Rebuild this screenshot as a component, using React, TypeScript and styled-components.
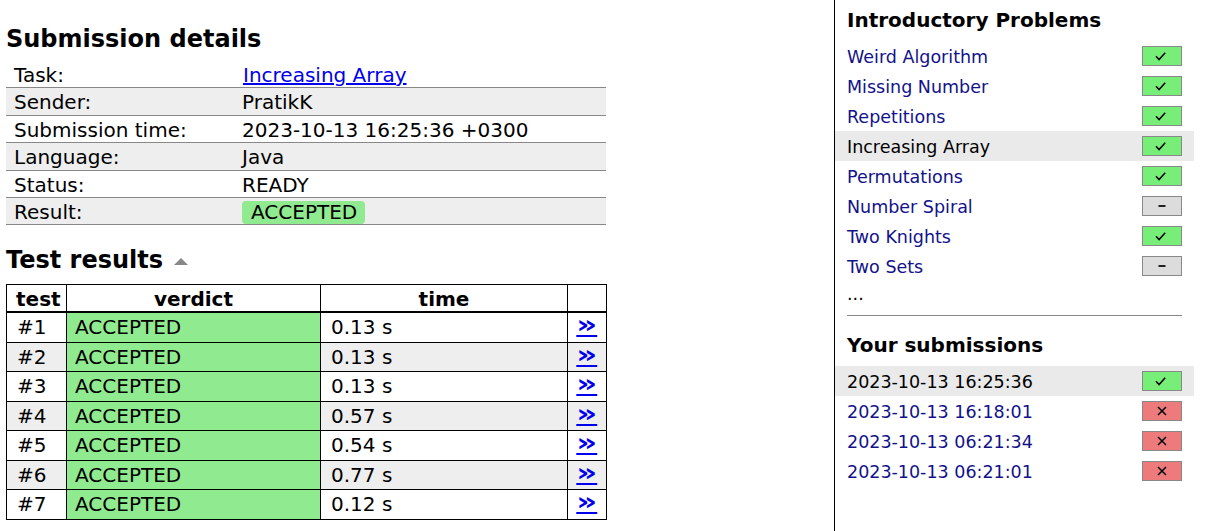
import React from 'react';
import styled, { createGlobalStyle } from 'styled-components';

const GlobalStyle = createGlobalStyle`
  html, body { margin: 0; padding: 0; background: #fff; }
  body {
    font-family: "DejaVu Sans", Verdana, sans-serif;
    font-size: 20px;
    color: #000;
  }
`;

const Page = styled.div`
  display: flex;
  min-height: 100vh;
`;

const Main = styled.main`
  flex: 0 0 834px;
  box-sizing: border-box;
  padding: 25px 0 0 6px;
`;

const Heading = styled.h2<{ $top?: number }>`
  margin: ${(p) => p.$top ?? 0}px 0 0;
  font-size: 24px;
  line-height: 28px;
  font-weight: bold;
  display: flex;
  align-items: center;
  gap: 11px;
`;

const Caret = styled.svg`
  width: 14px;
  height: 7px;
  margin-top: 3px;
`;

const SummaryTable = styled.table`
  width: 600px;
  border-collapse: collapse;
  margin-top: 8px;
`;

const SummaryRow = styled.tr<{ $alt?: boolean }>`
  background: ${(p) => (p.$alt ? '#eee' : 'transparent')};
  border-bottom: 1px solid #888;
`;

const SummaryLabel = styled.td`
  width: 212px;
  padding: 2px 8px 0;
  line-height: 24.4px;
`;

const SummaryValue = styled.td`
  padding: 2px 8px 0;
  line-height: 24.4px;
`;

const TaskLink = styled.a`
  color: #0000ee;
  text-decoration: underline;
  margin-left: 1px;
`;

const Badge = styled.span`
  display: inline-block;
  background: #90ea90;
  border-radius: 4px;
  padding: 0 8px 0 9px;
  line-height: 23px;
`;

const TestTable = styled.table`
  width: 600px;
  border-collapse: collapse;
  table-layout: fixed;
  margin-top: 10px;
  border: 1px solid #000;
`;

const Th = styled.th`
  font-weight: bold;
  text-align: center;
  padding: 2px 9px 0;
  line-height: 24px;
  border: 1px solid #000;
  border-bottom: 2px solid #000;
`;

const TestRow = styled.tr<{ $alt?: boolean }>`
  background: ${(p) => (p.$alt ? '#eee' : '#fff')};
`;

const Td = styled.td<{ $verdict?: boolean; $center?: boolean }>`
  padding: 3px 9px 2px 10px;
  line-height: 23.5px;
  height: 23.5px;
  border: 1px solid #000;
  white-space: nowrap;
  background: ${(p) => (p.$verdict ? '#90ea90' : 'inherit')};
  text-align: ${(p) => (p.$center ? 'center' : 'left')};
  ${(p) => (p.$verdict ? 'padding-left: 8px;' : '')}
  ${(p) => (p.$center ? 'padding: 3px 0 2px;' : '')}
`;

const DetailsLink = styled.a`
  display: inline-block;
  color: #0000ee;
  font-weight: bold;
  font-size: 24px;
  line-height: 18px;
  text-decoration: underline;
  transform: scaleX(1.35);
  position: relative;
  top: -1px;
`;

const Sidebar = styled.aside`
  flex: 0 0 359px;
  border-left: 1px solid #000;
  padding-top: 8px;
`;

const SideTitle = styled.h3<{ $top?: number }>`
  margin: ${(p) => p.$top ?? 0}px 12px 9px;
  font-size: 20px;
  line-height: 24px;
  font-weight: bold;
`;

const NavList = styled.ul`
  list-style: none;
  margin: 0;
  padding: 0;
`;

const NavItem = styled.li<{ $current?: boolean }>`
  display: flex;
  align-items: center;
  justify-content: space-between;
  height: 30px;
  padding: 0 12px;
  background: ${(p) => (p.$current ? '#eaeaea' : 'transparent')};
`;

const NavLink = styled.a<{ $current?: boolean }>`
  font-size: 17.5px;
  padding-top: 2px;
  color: ${(p) => (p.$current ? '#000' : '#12128a')};
  text-decoration: none;
`;

const More = styled.div`
  font-size: 17.5px;
  line-height: 26px;
  padding: 0 12px;
`;

const Separator = styled.div`
  margin: 8px 12px 0;
  border-top: 1px solid #888;
`;

type Status = 'ok' | 'none' | 'fail';

const statusBg: Record<Status, string> = {
  ok: '#77ee77',
  none: '#dcdcdc',
  fail: '#ee7b7b',
};

const StatusBox = styled.span<{ $state: Status }>`
  box-sizing: border-box;
  width: 40px;
  height: 20px;
  border: 1px solid #888;
  background: ${(p) => statusBg[p.$state]};
  display: flex;
  align-items: center;
  justify-content: center;
`;

const StatusIcon = ({ state }: { state: Status }) => {
  if (state === 'ok')
    return (
      <svg width="15" height="9" viewBox="0 0 15 9" style={{ marginTop: 1 }}>
        <polyline points="1,4.2 4.1,7.6 10.2,0.8" fill="none" stroke="#000" strokeWidth="1.5" />
      </svg>
    );
  if (state === 'none')
    return (
      <svg width="8" height="6" viewBox="0 0 8 6" style={{ marginBottom: 1 }}>
        <line x1="0.5" y1="3" x2="7.5" y2="3" stroke="#000" strokeWidth="1.7" />
      </svg>
    );
  return (
    <svg width="10" height="10" viewBox="0 0 10 10" style={{ marginBottom: 1 }}>
      <path d="M1 1 L9 9 M9 1 L1 9" stroke="#000" strokeWidth="1.5" fill="none" />
    </svg>
  );
};

const summary: { label: string; value: React.ReactNode }[] = [
  { label: 'Task:', value: <TaskLink href="#">Increasing Array</TaskLink> },
  { label: 'Sender:', value: 'PratikK' },
  { label: 'Submission time:', value: '2023-10-13 16:25:36 +0300' },
  { label: 'Language:', value: 'Java' },
  { label: 'Status:', value: 'READY' },
  { label: 'Result:', value: <Badge>ACCEPTED</Badge> },
];

const tests = ['0.13 s', '0.13 s', '0.13 s', '0.57 s', '0.54 s', '0.77 s', '0.12 s'];

const problems: { name: string; state: Status; current?: boolean }[] = [
  { name: 'Weird Algorithm', state: 'ok' },
  { name: 'Missing Number', state: 'ok' },
  { name: 'Repetitions', state: 'ok' },
  { name: 'Increasing Array', state: 'ok', current: true },
  { name: 'Permutations', state: 'ok' },
  { name: 'Number Spiral', state: 'none' },
  { name: 'Two Knights', state: 'ok' },
  { name: 'Two Sets', state: 'none' },
];

const submissions: { time: string; state: Status; current?: boolean }[] = [
  { time: '2023-10-13 16:25:36', state: 'ok', current: true },
  { time: '2023-10-13 16:18:01', state: 'fail' },
  { time: '2023-10-13 06:21:34', state: 'fail' },
  { time: '2023-10-13 06:21:01', state: 'fail' },
];

export default function App() {
  return (
    <>
      <GlobalStyle />
      <Page>
        <Main>
          <Heading>Submission details</Heading>
          <SummaryTable>
            <tbody>
              {summary.map((r, i) => (
                <SummaryRow key={r.label} $alt={i % 2 === 1}>
                  <SummaryLabel>{r.label}</SummaryLabel>
                  <SummaryValue>{r.value}</SummaryValue>
                </SummaryRow>
              ))}
            </tbody>
          </SummaryTable>

          <Heading $top={21}>
            Test results
            <Caret viewBox="0 0 14 7">
              <polygon points="0,7 7,0 14,7" fill="#888" />
            </Caret>
          </Heading>
          <TestTable>
            <colgroup>
              <col style={{ width: 60 }} />
              <col style={{ width: 254 }} />
              <col style={{ width: 247 }} />
              <col style={{ width: 39 }} />
            </colgroup>
            <thead>
              <tr>
                <Th>test</Th>
                <Th>verdict</Th>
                <Th>time</Th>
                <Th />
              </tr>
            </thead>
            <tbody>
              {tests.map((t, i) => (
                <TestRow key={i} $alt={i % 2 === 1}>
                  <Td>#{i + 1}</Td>
                  <Td $verdict>ACCEPTED</Td>
                  <Td>{t}</Td>
                  <Td $center>
                    <DetailsLink href="#">»</DetailsLink>
                  </Td>
                </TestRow>
              ))}
            </tbody>
          </TestTable>
        </Main>

        <Sidebar>
          <SideTitle>Introductory Problems</SideTitle>
          <NavList>
            {problems.map((p) => (
              <NavItem key={p.name} $current={p.current}>
                <NavLink href="#" $current={p.current}>
                  {p.name}
                </NavLink>
                <StatusBox $state={p.state}>
                  <StatusIcon state={p.state} />
                </StatusBox>
              </NavItem>
            ))}
          </NavList>
          <More>...</More>
          <Separator />
          <SideTitle $top={17}>Your submissions</SideTitle>
          <NavList>
            {submissions.map((s) => (
              <NavItem key={s.time} $current={s.current}>
                <NavLink href="#" $current={s.current}>
                  {s.time}
                </NavLink>
                <StatusBox $state={s.state}>
                  <StatusIcon state={s.state} />
                </StatusBox>
              </NavItem>
            ))}
          </NavList>
        </Sidebar>
      </Page>
    </>
  );
}
